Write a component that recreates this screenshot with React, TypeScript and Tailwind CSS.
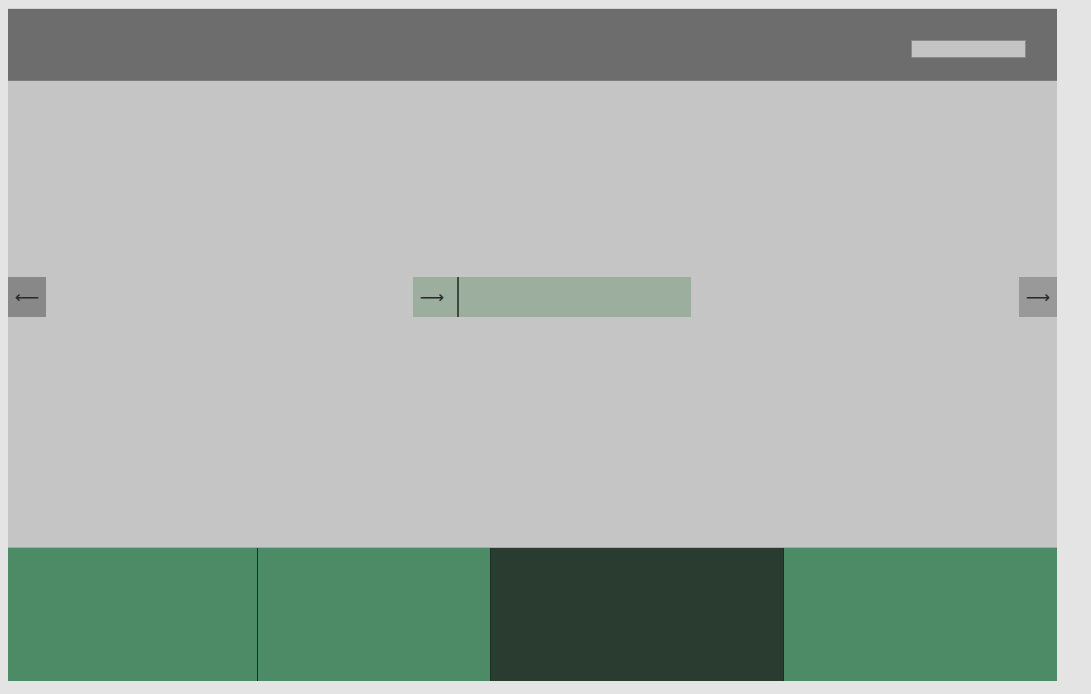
import React from 'react';

const App = () => {
  return (
    <div className="w-[1091px] h-[694px] bg-[#e4e4e4] pt-[8px] pl-[8px] font-['DejaVu_Sans',sans-serif]">
      <div className="w-[1049px] h-[673px] flex flex-col border-t border-[#cfcfcf]">
        <header className="h-[72px] bg-[#6d6d6d] border-b border-[#7d7d7d] flex items-center justify-end pr-[31px]">
          <div className="w-[115px] h-[18px] bg-[#c4c4c4] border border-[#8a8a8a] mt-[8px]" />
        </header>
        <main className="flex-1 bg-[#c5c5c5] flex items-start pt-[196px]">
          <button className="w-[38px] h-[40px] bg-[#888888] flex items-center justify-center text-[#2a2a2a] text-[17px] leading-none">
            ⟵
          </button>
          <div className="w-[278px] h-[40px] bg-[#9caf9f] flex items-stretch ml-[367px]">
            <div className="w-[46px] flex items-center justify-center pr-[6px] text-[#2a2a2a] text-[17px] leading-none border-r-2 border-[#3d4a40]">
              ⟶
            </div>
            <div className="flex-1" />
          </div>
          <div className="flex-1" />
          <button className="w-[38px] h-[40px] bg-[#999999] flex items-center justify-center text-[#2a2a2a] text-[17px] leading-none">
            ⟶
          </button>
        </main>
        <footer className="h-[134px] flex border-t border-[#a9a9a9]">
          <div className="w-[250px] bg-[#4c8b66] border-r border-[#1f2e25]" />
          <div className="w-[233px] bg-[#4c8b66] border-r border-[#1f2e25]" />
          <div className="w-[293px] bg-[#2a3b30] border-r border-[#1f2e25]" />
          <div className="flex-1 bg-[#4c8b66]" />
        </footer>
      </div>
    </div>
  );
};

export default App;
